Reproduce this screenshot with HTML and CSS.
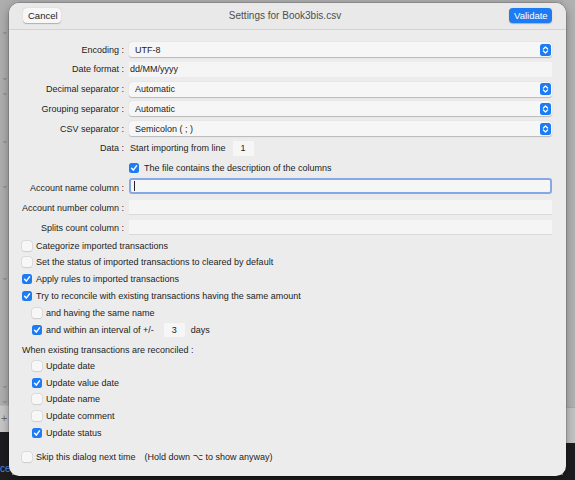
FILE: index.html
```html
<!DOCTYPE html>
<html lang="en">
<head>
<meta charset="utf-8">
<title>Settings for Book3bis.csv</title>
<link rel="stylesheet" href="styles.css">
</head>
<body>
<div class="desk">
  <div class="desk-left">
    <span class="chev c1">&#8964;</span>
    <span class="chev c2">&#8964;</span>
    <span class="chev c3">&#8964;</span>
    <span class="chev c4">&#8964;</span>
    <span class="chev c5">&#8964;</span>
    <span class="chev c6">&#8964;</span>
    <span class="chev c7">&#8964;</span>
    <span class="chev c8">&#8964;</span>
    <div class="plus-band">+</div>
    <div class="dark-left"><span class="blue-txt">ce</span></div>
  </div>
  <div class="desk-right">
    <div class="band-a"></div>
    <div class="band-b"></div>
    <div class="band-c"></div>
  </div>
  <div class="desk-bottom"></div>
</div>

<section class="dialog">
  <header class="bar">
    <button class="btn">Cancel</button>
    <div class="title">Settings for Book3bis.csv</div>
    <button class="btn primary">Validate</button>
  </header>

  <main class="content">
    <div class="form">
      <span class="lbl">Encoding :</span>
      <div class="popup"><span>UTF-8</span><svg class="arrows" viewBox="0 0 11 12"><rect width="11" height="12" rx="2.5" fill="#1b7cf4"/><path d="M3.4 5 L5.5 3 L7.6 5 M3.4 7 L5.5 9 L7.6 7" fill="none" stroke="#fff" stroke-width="1.2" stroke-linecap="round" stroke-linejoin="round"/></svg></div>

      <span class="lbl">Date format :</span>
      <div class="field">dd/MM/yyyy</div>

      <span class="lbl">Decimal separator :</span>
      <div class="popup"><span>Automatic</span><svg class="arrows" viewBox="0 0 11 12"><rect width="11" height="12" rx="2.5" fill="#1b7cf4"/><path d="M3.4 5 L5.5 3 L7.6 5 M3.4 7 L5.5 9 L7.6 7" fill="none" stroke="#fff" stroke-width="1.2" stroke-linecap="round" stroke-linejoin="round"/></svg></div>

      <span class="lbl">Grouping separator :</span>
      <div class="popup"><span>Automatic</span><svg class="arrows" viewBox="0 0 11 12"><rect width="11" height="12" rx="2.5" fill="#1b7cf4"/><path d="M3.4 5 L5.5 3 L7.6 5 M3.4 7 L5.5 9 L7.6 7" fill="none" stroke="#fff" stroke-width="1.2" stroke-linecap="round" stroke-linejoin="round"/></svg></div>

      <span class="lbl">CSV separator :</span>
      <div class="popup"><span>Semicolon ( ; )</span><svg class="arrows" viewBox="0 0 11 12"><rect width="11" height="12" rx="2.5" fill="#1b7cf4"/><path d="M3.4 5 L5.5 3 L7.6 5 M3.4 7 L5.5 9 L7.6 7" fill="none" stroke="#fff" stroke-width="1.2" stroke-linecap="round" stroke-linejoin="round"/></svg></div>

      <span class="lbl data-lbl">Data :</span>
      <div class="inline data-row">Start importing from line <span class="num">1</span></div>

      <span></span>
      <div class="inline"><span class="cb on"><svg viewBox="0 0 10 10"><path d="M2.6 5.2 L4.3 7.1 L7.5 2.9" fill="none" stroke="#fff" stroke-width="1.5" stroke-linecap="round" stroke-linejoin="round"/></svg></span>The file contains the description of the columns</div>

      <span class="lbl">Account name column :</span>
      <div class="field focus"><span class="caret"></span></div>

      <span class="lbl">Account number column :</span>
      <div class="field ruled"></div>

      <span class="lbl">Splits count column :</span>
      <div class="field ruled"></div>
    </div>

    <div class="opts">
      <div class="opt"><span class="cb"></span>Categorize imported transactions</div>
      <div class="opt"><span class="cb"></span>Set the status of imported transactions to cleared by default</div>
      <div class="opt"><span class="cb on"><svg viewBox="0 0 10 10"><path d="M2.6 5.2 L4.3 7.1 L7.5 2.9" fill="none" stroke="#fff" stroke-width="1.5" stroke-linecap="round" stroke-linejoin="round"/></svg></span>Apply rules to imported transactions</div>
      <div class="opt"><span class="cb on"><svg viewBox="0 0 10 10"><path d="M2.6 5.2 L4.3 7.1 L7.5 2.9" fill="none" stroke="#fff" stroke-width="1.5" stroke-linecap="round" stroke-linejoin="round"/></svg></span>Try to reconcile with existing transactions having the same amount</div>
      <div class="opt sub"><span class="cb"></span>and having the same name</div>
      <div class="opt sub"><span class="cb on"><svg viewBox="0 0 10 10"><path d="M2.6 5.2 L4.3 7.1 L7.5 2.9" fill="none" stroke="#fff" stroke-width="1.5" stroke-linecap="round" stroke-linejoin="round"/></svg></span>and within an interval of +/-<span class="num days-num">3</span><span class="days">days</span></div>
      <div class="heading">When existing transactions are reconciled :</div>
      <div class="opt sub tight"><span class="cb"></span>Update date</div>
      <div class="opt sub tight"><span class="cb on"><svg viewBox="0 0 10 10"><path d="M2.6 5.2 L4.3 7.1 L7.5 2.9" fill="none" stroke="#fff" stroke-width="1.5" stroke-linecap="round" stroke-linejoin="round"/></svg></span>Update value date</div>
      <div class="opt sub tight"><span class="cb"></span>Update name</div>
      <div class="opt sub tight"><span class="cb"></span>Update comment</div>
      <div class="opt sub tight"><span class="cb on"><svg viewBox="0 0 10 10"><path d="M2.6 5.2 L4.3 7.1 L7.5 2.9" fill="none" stroke="#fff" stroke-width="1.5" stroke-linecap="round" stroke-linejoin="round"/></svg></span>Update status</div>
      <div class="opt skip"><span class="cb"></span>Skip this dialog next time<span class="hint">(Hold down &#8997; to show anyway)</span></div>
    </div>
  </main>
</section>
</body>
</html>
```

FILE: styles.css
```css
* { box-sizing: border-box; margin: 0; padding: 0; }

html, body {
  width: 575px;
  height: 480px;
  overflow: hidden;
}

body {
  position: relative;
  background: #ababab;
  font-family: "Liberation Sans", "DejaVu Sans", sans-serif;
  font-size: 9px;
  color: #1c1c1c;
}

/* ---------- desktop behind the sheet ---------- */
.desk { position: absolute; inset: 0; }

.desk-left {
  position: absolute;
  left: 0; top: 0;
  width: 12px; height: 480px;
  background: #adadad;
}
.chev {
  position: absolute;
  left: 1px;
  font-size: 9px;
  line-height: 9px;
  color: #858585;
}
.c1 { top: 27px; } .c2 { top: 73px; } .c3 { top: 88px; } .c4 { top: 136px; }
.c5 { top: 181px; } .c6 { top: 273px; } .c7 { top: 381px; } .c8 { top: 396px; }

.plus-band {
  position: absolute;
  left: 0; top: 405px;
  width: 12px; height: 27px;
  background: #c6c6c6;
  border-top: 1px solid #b8b8b8;
  color: #6a6a6a;
  font-size: 11px;
  line-height: 25px;
  padding-left: 1px;
}
.dark-left {
  position: absolute;
  left: 0; top: 432px;
  width: 12px; height: 48px;
  background: #1d1d1f;
}
.blue-txt {
  position: absolute;
  left: 0; top: 31px;
  font-size: 10px;
  color: #4b8ef0;
}

.desk-right {
  position: absolute;
  right: 0; top: 0;
  width: 12px; height: 480px;
  display: flex;
  flex-direction: column;
}
.band-a { height: 407px; background: #b1b1b1; }
.band-b { height: 36px; background: #c3c3c3; border-top: 1px solid #a8a8a8; }
.band-c { flex: 1; background: #1d1d1f; }

.desk-bottom {
  position: absolute;
  left: 0; right: 0; bottom: 0;
  height: 5px;
  background: #1d1d1f;
}

/* ---------- sheet ---------- */
.dialog {
  position: absolute;
  left: 9px; top: 3px;
  width: 557px; height: 473px;
  background: #ececec;
  border-radius: 10px;
  box-shadow: 0 0 0 0.5px rgba(0,0,0,0.25), 0 3px 10px rgba(0,0,0,0.35);
  overflow: hidden;
}

.bar {
  height: 27px;
  display: flex;
  align-items: center;
  justify-content: space-between;
  padding: 0 14px 1px;
  background: #e9e9e9;
  border-bottom: 1px solid #d3d3d3;
}
.btn {
  font-family: inherit;
  font-size: 9.5px;
  height: 15px;
  border: none;
  border-radius: 4px;
  background: #f7f7f7;
  color: #1c1c1c;
  padding: 0 5px;
  box-shadow: 0 0.5px 1px rgba(0,0,0,0.25);
}
.btn:first-child { width: 38px; }
.btn.primary {
  width: 43px;
  background: #1d7cf4;
  color: #fff;
}
.title {
  font-size: 10px;
  color: #4e4e4e;
}

.content { padding: 12px 14px 0 0; }

.form {
  display: grid;
  grid-template-columns: 115px 1fr;
  column-gap: 5px;
  grid-auto-rows: 15px;
  row-gap: 4.8px;
  align-items: center;
}
.lbl {
  text-align: right;
  white-space: nowrap;
  color: #1c1c1c;
}

.popup {
  height: 15px;
  display: flex;
  align-items: center;
  justify-content: space-between;
  padding: 0 1px 0 6px;
  background: #f6f6f6;
  border-radius: 3px;
  box-shadow: 0 0.5px 1px rgba(0,0,0,0.22);
  color: #222;
}
.arrows { width: 11px; height: 12px; display: block; }

.field {
  height: 15px;
  display: flex;
  align-items: center;
  padding-left: 1px;
  background: #f5f5f5;
  color: #222;
}
.field.ruled { border-bottom: 1px solid #d9d9d9; }
.field.focus {
  height: 16px;
  margin-top: -4px;
  padding-left: 3px;
  border: 2px solid #86a8e6;
  border-radius: 3px;
  background: #f6f6f6;
}
.caret {
  width: 1px;
  height: 10px;
  background: #222;
}

.inline {
  display: flex;
  align-items: center;
  white-space: nowrap;
}
.data-row { padding-left: 1px; }
.num {
  display: inline-flex;
  align-items: center;
  justify-content: center;
  width: 21px;
  height: 15px;
  margin-left: 7px;
  background: #f6f6f6;
  border-radius: 1px;
  color: #222;
}
.inline .cb { margin-right: 5px; }

.cb {
  flex: none;
  width: 10px;
  height: 10px;
  border-radius: 2.5px;
  background: #f7f7f7;
  box-shadow: 0 0 0 0.5px #cdcdcd, 0 0.5px 1px rgba(0,0,0,0.12);
  display: inline-flex;
}
.cb.on {
  background: #1d7cf4;
  box-shadow: none;
}
.cb svg { width: 10px; height: 10px; display: block; }

.opts {
  display: flex;
  flex-direction: column;
  padding-left: 13px;
  margin-top: 2px;
}
.opt {
  height: 16.8px;
  display: flex;
  align-items: center;
  white-space: nowrap;
}
.opt.tight { height: 16.6px; }
.opt .cb { margin-right: 4px; }
.opt.sub { padding-left: 10px; }
.days-num { margin-left: 10px; height: 14px; }
.days { margin-left: 6px; }

.heading {
  height: 16px;
  margin-top: 4px;
  display: flex;
  align-items: center;
}
.opt.skip { margin-top: 8px; }
.hint { margin-left: 9px; }
```
